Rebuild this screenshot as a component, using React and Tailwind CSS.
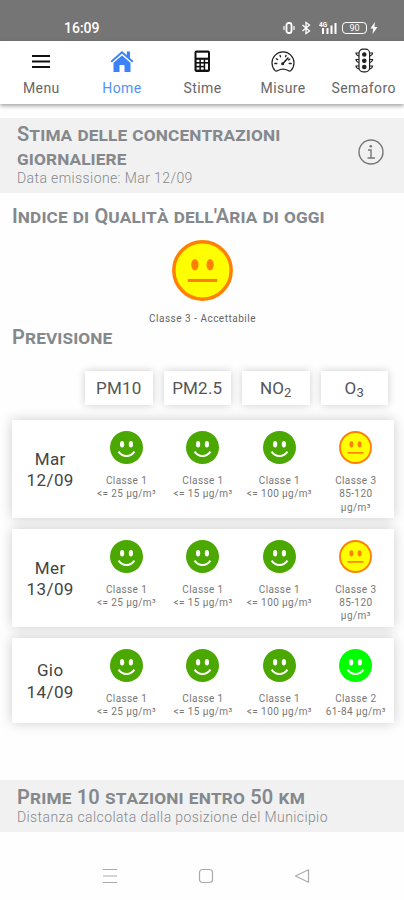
import React from 'react';

const tabs = [
  { label: 'Menu', Icon: MenuIcon },
  { label: 'Home', Icon: HomeIcon, active: true },
  { label: 'Stime', Icon: CalcIcon },
  { label: 'Misure', Icon: GaugeIcon },
  { label: 'Semaforo', Icon: TrafficIcon },
];

const days = [
  { day: 'Mar', date: '12/09', last: { level: 3, lines: ['85-120', 'µg/m³'] } },
  { day: 'Mer', date: '13/09', last: { level: 3, lines: ['85-120', 'µg/m³'] } },
  { day: 'Gio', date: '14/09', last: { level: 2, lines: ['61-84 µg/m³'] } },
];

const common = [
  { level: 1, lines: ['<= 25 µg/m³'] },
  { level: 1, lines: ['<= 15 µg/m³'] },
  { level: 1, lines: ['<= 100 µg/m³'] },
];

function MenuIcon() {
  return (
    <svg width="26" height="26" viewBox="0 0 26 26" stroke="#111" strokeWidth="2">
      <path d="M4 8h18M4 13.5h18M4 19h18" />
    </svg>
  );
}

function HomeIcon() {
  return (
    <svg width="26" height="26" viewBox="0 0 26 26" fill="#3b82f6">
      <path d="M4.5 14.8 13 7.6l8.500 7.200V24H15.500v-7h-5v7h-6z" />
      <path d="M2.2 13.7 13 4.3l10.800 9.400" fill="none" stroke="#3b82f6" strokeWidth="1.8" />
      <path d="M17.800 3.500h3.200v6.700l-3.200-2.800z" />
    </svg>
  );
}

function CalcIcon() {
  return (
    <svg width="26" height="26" viewBox="0 0 26 26">
      <rect x="5.5" y="2.5" width="15.5" height="21.5" rx="2" fill="#111" />
      <rect x="7.5" y="4.7" width="11.5" height="5" fill="#fff" />
      <g fill="#fff">
        <rect x="7.6" y="11.8" width="2.8" height="2.2" />
        <rect x="11.9" y="11.8" width="2.8" height="2.2" />
        <rect x="16.2" y="11.8" width="2.8" height="2.2" />
        <rect x="7.6" y="15.6" width="2.8" height="2.2" />
        <rect x="11.9" y="15.6" width="2.8" height="2.2" />
        <rect x="16.2" y="15.6" width="2.8" height="6" />
        <rect x="7.6" y="19.4" width="2.8" height="2.2" />
        <rect x="11.9" y="19.4" width="2.8" height="2.2" />
      </g>
    </svg>
  );
}

function GaugeIcon() {
  return (
    <svg width="26" height="26" viewBox="0 0 26 26" fill="none" stroke="#222" strokeLinecap="round">
      <path
        d="M5.200 22.700A11 11 0 1 1 20.800 22.700Q19.600 23.500 18.200 22.600Q13 19.500 7.800 22.600Q6.400 23.500 5.200 22.700z"
        strokeWidth="1.2"
      />
      <path d="M4.800 15.500h2M19.200 15.500h2M10 7.300l.5 1.600M16 7.300l-.4 1.400M6.300 10.700l1.300.9M19.800 11.200l-1.200.7" strokeWidth="1.3" />
      <path d="M12.700 15.700 18 10" strokeWidth="1.6" />
      <circle cx="12.6" cy="15.8" r="1.5" fill="#222" stroke="none" />
    </svg>
  );
}

function TrafficIcon() {
  return (
    <svg width="26" height="26" viewBox="0 0 26 26" fill="none" stroke="#222" strokeWidth="1.2">
      <rect x="8" y="1.2" width="10.6" height="22.6" rx="4" />
      <path d="M8 5H5q.3 2.500 3 3M8 11.500H5q.3 2.500 3 3M8 18H5q.3 2.500 3 3M18.600 5h3q-.3 2.500-3 3M18.600 11.500h3q-.3 2.500-3 3M18.600 18h3q-.3 2.500-3 3" />
      <g fill="#222">
        <circle cx="13.3" cy="6.5" r="1.7" />
        <circle cx="13.3" cy="12.7" r="1.7" />
        <circle cx="13.3" cy="19" r="1.7" />
      </g>
    </svg>
  );
}

function Face({ level, size }) {
  if (level === 3) {
    return (
      <svg width={size} height={size} viewBox="0 0 60 60">
        <circle cx="30" cy="30" r="28.2" fill="#ff0" stroke="#ff8000" strokeWidth="3.4" />
        <g fill="#ff8000">
          <ellipse cx="22.5" cy="24.3" rx="3.6" ry="5.6" />
          <ellipse cx="37.5" cy="24.3" rx="3.6" ry="5.6" />
        </g>
        <path d="M15.500 39.800h29" stroke="#ff8000" strokeWidth="3" />
      </svg>
    );
  }
  return (
    <svg width={size} height={size} viewBox="0 0 60 60">
      <circle cx="30" cy="30" r="30" fill={level === 1 ? '#4aa800' : '#00ff00'} />
      <g fill="#fff">
        <ellipse cx="22" cy="24" rx="3.8" ry="5.8" />
        <ellipse cx="38" cy="24" rx="3.8" ry="5.8" />
      </g>
      <path d="M15.500 37.500Q21 45.500 30 45.500T44.500 37.500" fill="none" stroke="#fff" strokeWidth="3.6" />
    </svg>
  );
}

function StatusBar() {
  return (
    <div className="flex h-[41px] shrink-0 items-end justify-between bg-[#757575] pr-[26px] pb-[5px] pl-16 text-white">
      <span className="text-[14px] leading-4 font-medium">16:09</span>
      <div className="flex h-4 items-center">
        <svg width="12" height="14" viewBox="0 0 12 14" fill="none" stroke="#fff">
          <rect x="3.5" y="2" width="5" height="10" rx="2" strokeWidth="1.8" />
          <path d="M1 5v4M11 5v4" strokeWidth="1.2" />
        </svg>
        <svg className="ml-1.5" width="10" height="14" viewBox="0 0 10 14" fill="none" stroke="#fff" strokeWidth="1.3">
          <path d="m1.500 4 7 6L5 12.500v-11L8.500 4l-7 6" />
        </svg>
        <svg className="ml-2" width="19" height="14" viewBox="0 0 19 14" fill="#fff">
          <text x="0" y="6" fontSize="6.5" fontWeight="700">4G</text>
          <path d="M3 7h2v6H3zM7.500 7h2v6h-2zM11.500 4.500h2V13h-2zM15.500 2h2v11h-2z" />
        </svg>
        <div className="ml-1 flex h-3 w-[25px] items-center justify-center rounded-[4px] border border-white text-[9px] leading-none">
          90
        </div>
        <svg className="ml-[3px]" width="8" height="12" viewBox="0 0 8 12" fill="#fff">
          <path d="M4.800 0 .5 6.500h2.700L2.500 12l5-7H4.500z" />
        </svg>
      </div>
    </div>
  );
}

function Cell({ level, lines }) {
  return (
    <div className="flex flex-col items-center pt-[11px]">
      <Face level={level} size={33} />
      <div className="mt-[10px] text-center text-[10px] leading-[13.3px] tracking-[0.4px] whitespace-nowrap text-[#777]">
        <div>Classe {level}</div>
        {lines.map((l) => (
          <div key={l}>{l}</div>
        ))}
      </div>
    </div>
  );
}

export default function App() {
  return (
    <main className="flex h-[900px] w-[404px] flex-col overflow-hidden bg-[#fefefe] font-[Roboto,sans-serif]">
      <StatusBar />

      <nav className="grid h-[63px] shrink-0 grid-cols-5 bg-white pl-px shadow-[0_2px_4px_rgba(0,0,0,0.35)]">
        {tabs.map(({ label, Icon, active }) => (
          <div key={label} className="flex flex-col items-center pt-[7px]">
            <Icon />
            <span
              className={`mt-1.5 text-[14px] leading-[17px] tracking-[0.4px] ${active ? 'text-[#4f93f8]' : 'text-[#666]'}`}
            >
              {label}
            </span>
          </div>
        ))}
      </nav>

      <section className="mt-[14px] flex h-[75px] shrink-0 items-center justify-between bg-[#f1f1f1] pr-5 pl-[17px] text-[#85898d]">
        <div className="-mt-[2px]">
          <h2 className="w-[290px] text-[20px] leading-6 font-semibold tracking-[0.14px] [font-variant:small-caps]">
            Stima delle concentrazioni giornaliere
          </h2>
          <p className="text-[14px] leading-[17px] font-light tracking-[0.4px]">Data emissione: Mar 12/09</p>
        </div>
        <svg className="mt-[-7px]" width="26" height="26" viewBox="0 0 26 26" fill="none" stroke="#777" strokeWidth="1.4">
          <circle cx="13" cy="13" r="12" />
          <path d="M10 11h3v8M9.500 19h7.500" />
          <circle cx="12.8" cy="7.3" r="1.3" fill="#777" stroke="none" />
        </svg>
      </section>

      <h2 className="mt-[11px] pl-3 text-[20px] leading-6 font-semibold tracking-[0.12px] text-[#85898d] [font-variant:small-caps]">
        Indice di Qualità dell'Aria di oggi
      </h2>
      <div className="mt-3 flex flex-col items-center pl-px">
        <Face level={3} size={61} />
        <span className="mt-[11px] text-[10px] leading-[14px] tracking-[0.5px] text-[#666]">Classe 3 - Accettabile</span>
      </div>
      <h2 className="-mt-px pl-3 text-[20px] leading-6 font-semibold tracking-[0.1px] text-[#85898d] [font-variant:small-caps]">
        Previsione
      </h2>

      <div className="mt-[22px] mr-4 ml-[85px] grid h-[33px] shrink-0 grid-cols-4 gap-[11px] text-[17px] leading-[34px] tracking-[0.2px] text-[#555]">
        <div className="bg-white text-center shadow-[0_0_8px_rgba(0,0,0,0.2)]">PM10</div>
        <div className="bg-white text-center shadow-[0_0_8px_rgba(0,0,0,0.2)]">PM2.5</div>
        <div className="bg-white text-center shadow-[0_0_8px_rgba(0,0,0,0.2)]">
          NO<sub className="text-[13px]">2</sub>
        </div>
        <div className="bg-white text-center shadow-[0_0_8px_rgba(0,0,0,0.2)]">
          O<sub className="text-[13px]">3</sub>
        </div>
      </div>

      <div className="mt-4 mr-[10px] ml-3 flex flex-col gap-[10.5px]">
        {days.map(({ day, date, last }) => (
          <div key={day} className="grid grid-cols-5 bg-white pb-[4.5px] shadow-[0_0_12px_rgba(0,0,0,0.2)]">
            <div className="mt-[7px] self-center text-center text-[17px] leading-[21.5px] tracking-[0.4px] text-[#444]">
              <div>{day}</div>
              <div>{date}</div>
            </div>
            {[...common, last].map((c, i) => (
              <Cell key={i} {...c} />
            ))}
          </div>
        ))}
      </div>

      <section className="mt-auto flex h-[52px] shrink-0 flex-col justify-center bg-[#f1f1f1] pb-px pl-[17px] text-[#85898d]">
        <h2 className="text-[20px] leading-6 font-semibold tracking-[0.16px] [font-variant:small-caps]">
          Prime 10 stazioni entro 50 km
        </h2>
        <p className="text-[14px] leading-[17px] font-light tracking-[0.4px]">
          Distanza calcolata dalla posizione del Municipio
        </p>
      </section>

      <div className="flex h-[68px] shrink-0 items-center justify-between pt-5 pr-[94px] pl-[102px]">
        <svg width="16" height="16" viewBox="0 0 16 16" stroke="#aaa" strokeWidth="1.2">
          <path d="M1 1.500h14M1 8h14M1 14.500h14" />
        </svg>
        <svg width="16" height="16" viewBox="0 0 16 16" fill="none" stroke="#aaa" strokeWidth="1.2">
          <rect x="1.5" y="1.5" width="13" height="13" rx="3" />
        </svg>
        <svg width="16" height="16" viewBox="0 0 16 16" fill="none" stroke="#aaa" strokeWidth="1.2" strokeLinejoin="round">
          <path d="M1.500 8 14.500 1.800v12.400z" />
        </svg>
      </div>
    </main>
  );
}
